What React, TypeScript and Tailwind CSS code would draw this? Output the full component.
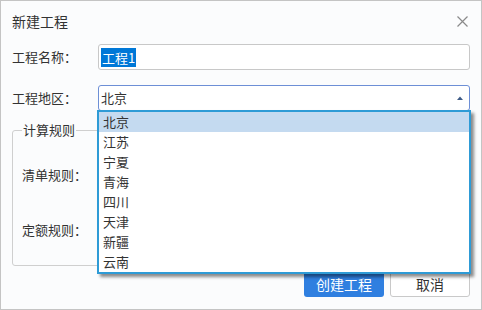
import { useState } from 'react';

const REGIONS = ['北京', '江苏', '宁夏', '青海', '四川', '天津', '新疆', '云南'];

const FONT = "font-['Microsoft_YaHei','Noto_Sans_CJK_SC',sans-serif]";

export default function App() {
  const [region, setRegion] = useState('北京');

  return (
    <div className={`relative w-[482px] h-[310px] border border-[#c4c4c4] bg-[#fbfcfd] text-[#333] ${FONT}`}>
      {/* Header */}
      <div className="flex h-[40px] items-center justify-between pl-[11px] pr-[13px]">
        <span className="text-[14px] text-[#333]">新建工程</span>
        <svg width="11" height="11" viewBox="0 0 11 11" className="text-[#8a8a8a]">
          <path d="M0.5 0.5 L10.5 10.5 M10.5 0.5 L0.5 10.5" stroke="currentColor" strokeWidth="1.2" fill="none" />
        </svg>
      </div>

      {/* Name */}
      <div className="mt-[3px] flex h-[26px] items-center pl-[11px] pr-[11px]">
        <span className="w-[86px] text-[13px]">工程名称：</span>
        <div className="flex h-full flex-1 items-center rounded-[3px] border border-[#c8c8c8] bg-white pl-[2px]">
          <span className="bg-[#0078d7] px-[1px] text-[13px] leading-[19px] text-white">工程1</span>
        </div>
      </div>

      {/* Region */}
      <div className="mt-[15px] flex h-[26px] items-center pl-[11px] pr-[11px]">
        <span className="w-[86px] text-[13px]">工程地区：</span>
        <div className="flex h-full flex-1 items-center justify-between rounded-[3px] border border-[#6d8fd6] bg-white pl-[2px] pr-[6px]">
          <span className="text-[13px]">{region}</span>
          <svg width="6" height="4" viewBox="0 0 6 4">
            <path d="M0 4 L3 0.5 L6 4 Z" fill="#3d5a86" />
          </svg>
        </div>
      </div>

      {/* Rule group */}
      <fieldset className="mx-[11px] mt-[12px] h-[143px] rounded-[3px] border border-[#cfcfcf] px-[9px]">
        <legend className="px-[1px] text-[13px] leading-[14px]">计算规则</legend>
        <div className="mt-[28px] text-[13px]">清单规则：</div>
        <div className="mt-[35px] text-[13px]">定额规则：</div>
      </fieldset>

      {/* Buttons */}
      <div className="mt-[5px] flex justify-end gap-[6px] pr-[11px]">
        <button className="h-[26px] w-[80px] rounded-[3px] bg-[#2f7fe0] text-[14px] text-white">创建工程</button>
        <button className="h-[26px] w-[80px] rounded-[3px] border border-[#c9c9c9] bg-white text-[14px] text-[#333]">取消</button>
      </div>

      {/* Open dropdown list */}
      <ul className="absolute left-[96px] top-[109px] w-[374px] border-2 border-[#2e9bd6] bg-white shadow-[3px_3px_3px_rgba(0,0,0,0.45)]">
        {REGIONS.map((r) => (
          <li
            key={r}
            onClick={() => setRegion(r)}
            className={`h-[20px] pl-[4px] text-[13px] leading-[20px] ${r === region ? 'bg-[#c4daf0]' : ''}`}
          >
            {r}
          </li>
        ))}
      </ul>
    </div>
  );
}
